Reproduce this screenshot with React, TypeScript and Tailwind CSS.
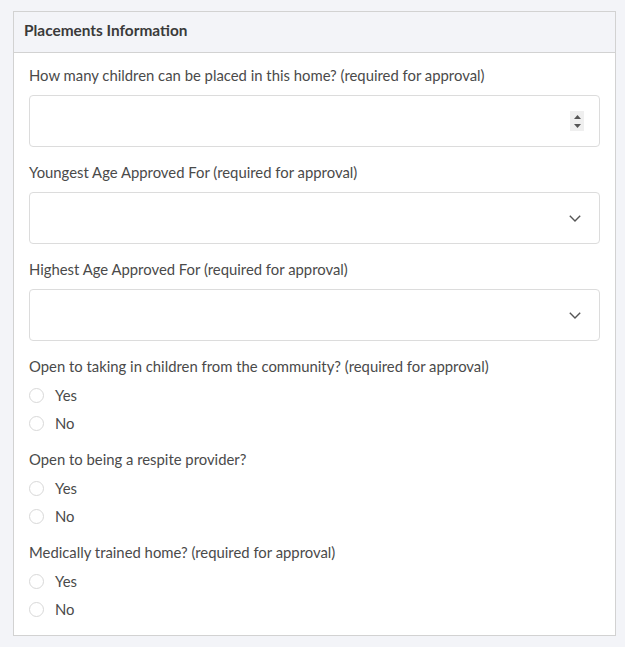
const fields = [
  { label: "How many children can be placed in this home? (required for approval)", kind: "number" },
  { label: "Youngest Age Approved For (required for approval)", kind: "select" },
  { label: "Highest Age Approved For (required for approval)", kind: "select" },
];

const radios = [
  "Open to taking in children from the community? (required for approval)",
  "Open to being a respite provider?",
  "Medically trained home? (required for approval)",
];

const Spinner = () => (
  <div className="flex h-[20px] w-[14px] flex-col items-center justify-center gap-[5px] bg-[#efefef]">
    <svg width="7" height="4" viewBox="0 0 7 4">
      <path d="M0 4 L3.5 0 L7 4 Z" fill="#555" />
    </svg>
    <svg width="7" height="4" viewBox="0 0 7 4">
      <path d="M0 0 L7 0 L3.5 4 Z" fill="#555" />
    </svg>
  </div>
);

const Chevron = () => (
  <svg width="12" height="7" viewBox="0 0 12 7" fill="none">
    <path d="M0.8 0.8 L6 6 L11.2 0.8" stroke="#555" strokeWidth="1.4" />
  </svg>
);

const App = () => {
  return (
    <div className="min-h-[647px] bg-[#f3f4f8] pt-[11px] font-['Lato','Liberation_Sans',sans-serif] text-[14.85px] leading-[21px] text-[#4a4a4a]">
      <div className="ml-[13px] w-[603px] border border-[#d2d2d2] bg-white">
        {/* Header */}
        <div className="border-b border-[#d2d2d2] bg-[#f3f4f8] px-[10px] pb-[11px] pt-[8px]">
          <h1 className="text-[15.4px] font-bold text-[#3a3a3a]">Placements Information</h1>
        </div>

        <div className="flex flex-col gap-[15px] px-[15px] pb-[15px] pt-[12px]">
          {fields.map((f, i) => (
            <div key={i}>
              <label className="mb-[9px] block">{f.label}</label>
              <div
                className={
                  f.kind === "number"
                    ? "flex h-[52px] items-center justify-end rounded border border-[#dcdcdc] pr-[15px]"
                    : "flex h-[52px] items-center justify-end rounded border border-[#dcdcdc] pr-[18px]"
                }
              >
                {f.kind === "number" ? <Spinner /> : <Chevron />}
              </div>
            </div>
          ))}

          {radios.map((q, i) => (
            <div key={i}>
              <div className="mb-[8px]">{q}</div>
              <div className="flex flex-col gap-[7px]">
                {["Yes", "No"].map((opt) => (
                  <label key={opt} className="flex items-center gap-[11px]">
                    <span className="h-[15px] w-[15px] rounded-full border border-[#d8d8d8] bg-white" />
                    <span>{opt}</span>
                  </label>
                ))}
              </div>
            </div>
          ))}
        </div>
      </div>
    </div>
  );
};

export default App;
